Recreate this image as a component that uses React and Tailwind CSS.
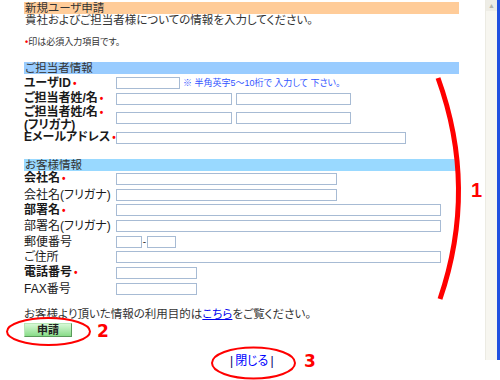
import React from "react";

function Req() {
  return <span className="text-[#ff0000] text-[10px] font-bold ml-[2px]">•</span>;
}

function Box({ w }) {
  return <div className={`h-[12px] border border-[#a7bbd4] bg-white shrink-0 ${w}`} />;
}

function Row({ label, req, bold, children }) {
  return (
    <div className="flex items-center h-[15.7px]">
      <div
        className={`w-[92px] shrink-0 text-[12px] leading-[12px] text-[#1a1a1a] ${bold ? "font-bold" : ""}`}
      >
        {label}
        {req && <Req />}
      </div>
      <div className="flex items-center gap-[4px]">{children}</div>
    </div>
  );
}

export default function App() {
  return (
    <div className="relative w-[500px] h-[380px] overflow-hidden bg-white font-['Liberation_Sans','Noto_Sans_CJK_JP',sans-serif] [font-feature-settings:'palt']">
      <div className="flex">
        <div className="w-[485px] pl-[24px] pt-[2px]">
          <div className="w-[435px] h-[12px] bg-[#ffcc99] px-[1px] text-[11.5px] leading-[12px] text-[#333]">
            新規ユーザ申請
          </div>
          <div className="h-[12px] text-[11.5px] leading-[12px] text-[#333] pl-[1px]">
            貴社およびご担当者様についての情報を入力してください。
          </div>
          <div className="mt-[11px] h-[10px] text-[9px] leading-[10px] text-[#333] pl-[1px]">
            <span className="text-[#ff0000] font-bold">•</span>印は必須入力項目です。
          </div>

          <div className="mt-[15px] w-[435px] h-[12px] bg-[#99ccff] px-[1px] text-[11.5px] leading-[12px] text-[#333]">
            ご担当者情報
          </div>
          <div className="mt-[1px]">
            <div className="flex items-center h-[16px]">
              <div className="w-[92px] shrink-0 text-[12px] leading-[12px] font-bold text-[#1a1a1a]">
                ユーザID
                <Req />
              </div>
              <Box w="w-[64px]" />
              <span className="ml-[3px] text-[9px] leading-[10px] text-[#3355ff]">
                ※ 半角英字5～10桁で 入力して 下さい。
              </span>
            </div>
            <div className="flex items-center h-[15px]">
              <div className="w-[92px] shrink-0 text-[12px] leading-[12px] font-bold text-[#1a1a1a]">
                ご担当者姓/名
                <Req />
              </div>
              <div className="flex gap-[4px]">
                <Box w="w-[116px]" />
                <Box w="w-[115px]" />
              </div>
            </div>
            <div className="flex items-center h-[24px]">
              <div className="w-[92px] shrink-0 text-[12px] leading-[12px] font-bold text-[#1a1a1a]">
                <div>
                  ご担当者姓/名
                  <Req />
                </div>
                <div>(フリガナ)</div>
              </div>
              <div className="flex gap-[4px]">
                <Box w="w-[116px]" />
                <Box w="w-[115px]" />
              </div>
            </div>
            <div className="flex items-center h-[15px]">
              <div className="w-[92px] shrink-0 text-[12px] leading-[12px] font-bold text-[#1a1a1a]">
                Eメールアドレス
                <Req />
              </div>
              <Box w="w-[290px]" />
            </div>
          </div>

          <div className="mt-[14px] w-[435px] h-[12px] bg-[#99d9ff] px-[1px] text-[11.5px] leading-[12px] text-[#333]">
            お客様情報
          </div>
          <div>
            <Row label="会社名" req bold>
              <Box w="w-[221px]" />
            </Row>
            <Row label="会社名(フリガナ)">
              <Box w="w-[221px]" />
            </Row>
            <Row label="部署名" req bold>
              <Box w="w-[325px]" />
            </Row>
            <Row label="部署名(フリガナ)">
              <Box w="w-[325px]" />
            </Row>
            <div className="flex items-center h-[15.7px]">
              <div className="w-[92px] shrink-0 text-[12px] leading-[12px] text-[#1a1a1a]">郵便番号</div>
              <Box w="w-[26px]" />
              <span className="w-[5px] text-[10px] leading-[10px] text-[#333] text-center">-</span>
              <Box w="w-[29px]" />
            </div>
            <Row label="ご住所">
              <Box w="w-[325px]" />
            </Row>
            <Row label="電話番号" req bold>
              <Box w="w-[81px]" />
            </Row>
            <Row label="FAX番号">
              <Box w="w-[81px]" />
            </Row>
          </div>

          <div className="mt-[11px] h-[12px] text-[11.5px] leading-[12px] text-[#333]">
            お客様より頂いた情報の利用目的は
            <span className="text-[#0000ee] underline">こちら</span>
            をご覧ください。
          </div>
          <div className="mt-[3px] w-[48px] h-[14px] flex items-center justify-center border border-[#b8e8b8] border-r-[#5a9a5a] border-b-[#5a9a5a] bg-gradient-to-b from-[#d6f8d6] to-[#88dc88] text-[11px] leading-[12px] font-bold text-[#222]">
            申請
          </div>
          <div className="mt-[18px] pl-[206px] flex text-[12px] leading-[12px]">
            <span className="text-[#000066]">|</span>
            <span className="text-[#0000ff] px-[2px]">閉じる</span>
            <span className="text-[#000066]">|</span>
          </div>
        </div>

        <div className="flex h-[360px]">
          <div className="w-[12px] h-full bg-[#f7f6f0] border-l border-[#ecebe3] flex flex-col">
            <div className="h-[11px] flex items-center justify-center bg-[#eeede6] text-[7px] leading-[7px] text-[#b5b5ad]">
              ▲
            </div>
          </div>
          <div className="w-[3px] h-full bg-[#2050e0]" />
        </div>
      </div>

      <svg className="absolute inset-0 pointer-events-none" width="500" height="380" viewBox="0 0 500 380">
        <path d="M 438 78 Q 478 188 440 299" fill="none" stroke="#ff0000" strokeWidth="5" />
        <ellipse cx="48.5" cy="331.5" rx="41.5" ry="13.5" fill="none" stroke="#ff0000" strokeWidth="2" />
        <ellipse cx="253.5" cy="363" rx="41.5" ry="15.5" fill="none" stroke="#ff0000" strokeWidth="2" />
      </svg>
      <span className="absolute left-[471px] top-[180px] text-[20px] leading-none font-bold text-[#ff0000] font-['Liberation_Sans',sans-serif]">
        1
      </span>
      <span className="absolute left-[97px] top-[323px] text-[17px] leading-none font-bold text-[#ff0000] font-['DejaVu_Sans',sans-serif]">
        2
      </span>
      <span className="absolute left-[304px] top-[353px] text-[17px] leading-none font-bold text-[#ff0000] font-['DejaVu_Sans',sans-serif]">
        3
      </span>
    </div>
  );
}
